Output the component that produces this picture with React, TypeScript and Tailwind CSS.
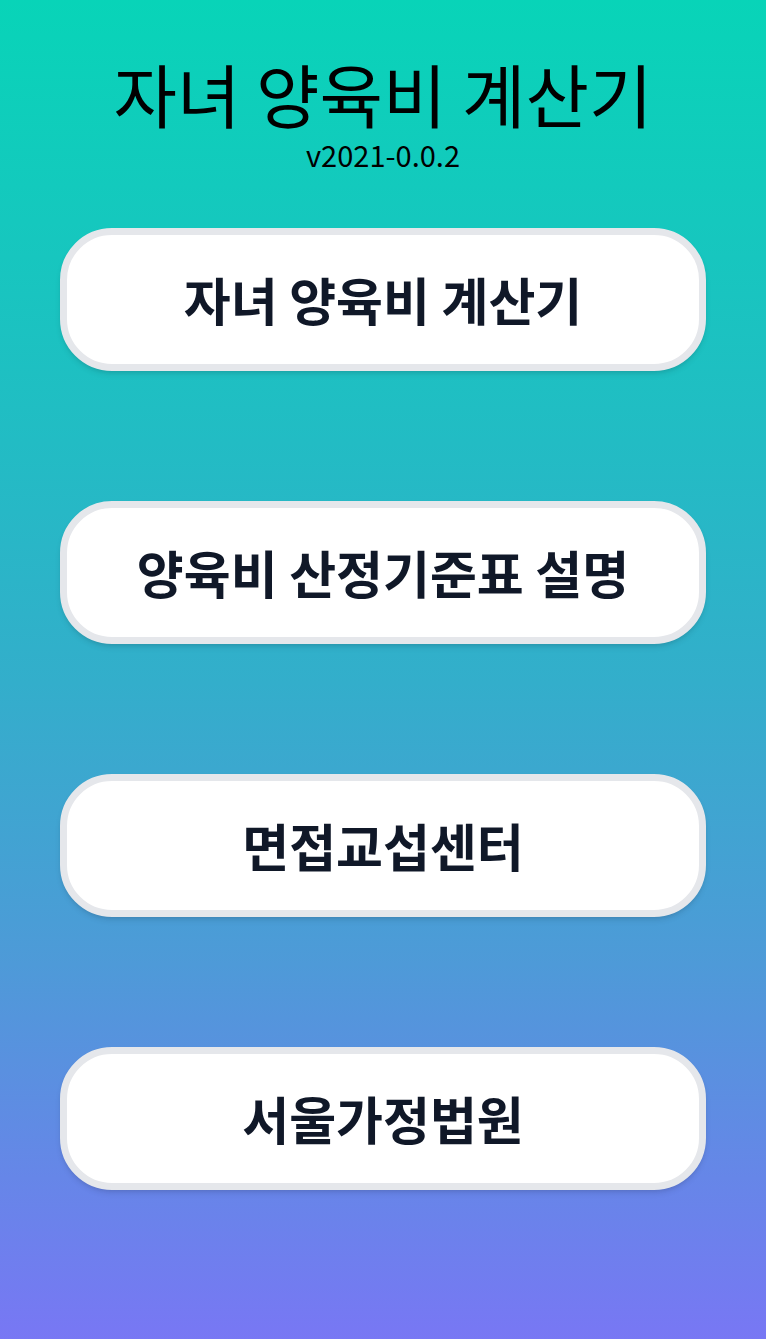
const menus = ["자녀 양육비 계산기", "양육비 산정기준표 설명", "면접교섭센터", "서울가정법원"];

export default function App() {
  return (
    <div
      className="min-h-[1339px] w-full bg-[linear-gradient(to_bottom,#08d4b8_0%,#22bcc4_33%,#33aecb_51%,#4e9ad8_72%,#7877f4_100%)] flex flex-col items-center text-black"
      style={{ fontFamily: '"Noto Sans CJK KR", "Noto Sans", sans-serif' }}
    >
      <h1 className="mt-[55px] text-[69px] leading-[76px] font-normal">자녀 양육비 계산기</h1>
      <p className="mt-[6px] text-[29px] leading-[34px]">v2021-0.0.2</p>
      <div className="mt-[57px] w-full px-[60px] flex flex-col gap-[130px]">
        {menus.map((m) => (
          <button
            key={m}
            className="h-[143px] w-full rounded-[52px] border-[7px] border-gray-200 bg-white shadow-md text-[51px] font-bold text-gray-900"
          >
            {m}
          </button>
        ))}
      </div>
    </div>
  );
}
